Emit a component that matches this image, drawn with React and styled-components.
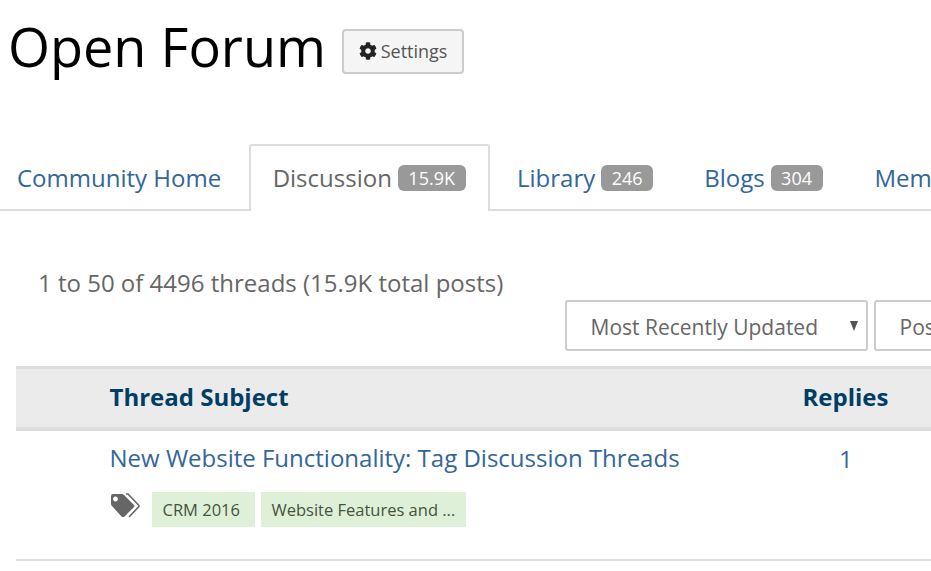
import React from "react";
import styled, { createGlobalStyle } from "styled-components";
import { FaCog } from "react-icons/fa";

const Global = createGlobalStyle`
  html, body { margin: 0; padding: 0; background: #fff; overflow: hidden; }
  body { font-family: "Open Sans", "Liberation Sans", sans-serif; color: #666; }
`;
const Page = styled.div`
  width: 931px; height: 571px; overflow: hidden;
`;
const Header = styled.header`
  display: flex; align-items: flex-start; gap: 16px;
  padding: 10px 0 0 8px; height: 134px; box-sizing: border-box;
`;
const Title = styled.h1`
  margin: 0; font-weight: 400; font-size: 54px; line-height: 72px; color: #000;
`;
const SettingsButton = styled.button`
  display: flex; align-items: center; gap: 4px; margin-top: 19px;
  width: 122px; height: 45px; justify-content: center; padding: 0 0 2px;
  background: #f5f5f5; border: 2px solid #ccc; border-radius: 4px;
  font-family: inherit; font-size: 18px; color: #555;
  svg { color: #222; font-size: 18px; }
`;
const Tabs = styled.nav`
  display: flex; align-items: flex-end; height: 77px; box-sizing: border-box;
  border-bottom: 2px solid #ddd; white-space: nowrap;
`;
const Tab = styled.a`
  display: flex; align-items: center; gap: 6px; box-sizing: border-box; flex: none;
  font-size: 24px; color: ${p => (p.$active ? "#666" : "#336699")};
  height: ${p => (p.$active ? "67px" : "63px")};
  padding: 0 ${p => p.$pr}px ${p => (p.$active ? "2px" : "0")} ${p => p.$pl}px;
  ${p => p.$active && `
    background: #fff; border: 2px solid #ddd; border-bottom: 0;
    border-radius: 3px 3px 0 0; position: relative; margin-bottom: -2px;
  `}
`;
const Badge = styled.span`
  display: inline-block; background: #999; color: #fff; border-radius: 6px;
  font-size: 18px; line-height: 26px; height: 26px; padding: 0 10.5px;
`;
const Summary = styled.div`
  padding: 57px 0 0 38px; font-size: 24px; line-height: 30px; color: #666;
`;
const Filters = styled.div`
  display: flex; gap: 6px; padding: 2px 0 0 565px; white-space: nowrap;
`;
const Select = styled.div`
  position: relative; flex: none; box-sizing: border-box; height: 51px;
  width: ${p => p.$w}px; padding-left: 23.5px; line-height: 50px;
  border: 2px solid #ccc; border-radius: 3px; font-size: 21px; color: #666; background: #fff;
`;
const Caret = styled.span`
  position: absolute; right: 8px; top: 19px; width: 0; height: 0;
  border-left: 4.5px solid transparent; border-right: 4.5px solid transparent;
  border-top: 10px solid #555;
`;
const ThreadGrid = styled.div`
  margin: 15px 0 0 16px; display: grid; grid-template-columns: 93.5px 660.5px 1fr;
`;
const HeadCell = styled.div`
  box-sizing: border-box; height: 65px; background: #ebebeb; color: #003e66;
  border-top: 3px solid #ddd; border-bottom: 4px solid #ddd;
  font-size: 24px; font-weight: 700; line-height: 56px;
  ${p => p.$pad && `padding-left: ${p.$pad}px;`}
`;
const RowCell = styled.div`
  box-sizing: border-box; height: 130px; border-bottom: 2px solid #ddd;
  padding-top: 10px;
`;
const ThreadLink = styled.a`
  display: block; font-size: 24px; line-height: 34px; color: #336699;
`;
const ReplyCount = styled.div`
  font-size: 24px; line-height: 34px; color: #336699; padding: 1px 0 0 69px;
`;
const TagRow = styled.div`
  display: flex; align-items: flex-start; gap: 6px; margin-top: 17px;
`;
const TagSvg = styled.svg`
  width: 30px; height: 26px; flex: none; margin: 1px 6.5px 0 0;
`;
const Tag = styled.span`
  background: #dff0d8; color: #44543c; font-size: 16.5px; line-height: 35px; height: 35px;
  padding: 0 ${p => p.$pr}px 0 10.5px;
`;

const TagsIcon = () => (
  <TagSvg viewBox="0 0 30 26">
    <path
      fill="#666"
      fillRule="evenodd"
      d="M1 3Q1 1 3 1L12 1Q13 1 14 2L24 12Q25 13 24 14L14.5 23.5Q13 25 11.5 23.5L2 13Q1 12 1 11ZM5.5 3.6a2.4 2.4 0 1 0 .01 0Z"
    />
    <path
      fill="none"
      stroke="#666"
      strokeWidth="1.6"
      d="M16 1L18 1L28.5 12Q29.5 13 28.5 14L19 24"
    />
  </TagSvg>
);

export default function App() {
  return (
    <Page>
      <Global />
      <Header>
        <Title>Open Forum</Title>
        <SettingsButton><FaCog />Settings</SettingsButton>
      </Header>
      <Tabs>
        <Tab $pl={17} $pr={28}>Community Home</Tab>
        <Tab $active $pl={21.5} $pr={22.5}>Discussion <Badge>15.9K</Badge></Tab>
        <Tab $pl={27} $pr={24}>Library <Badge>246</Badge></Tab>
        <Tab $pl={27} $pr={25}>Blogs <Badge>304</Badge></Tab>
        <Tab $pl={27} $pr={0}>Members</Tab>
      </Tabs>
      <Summary>1 to 50 of 4496 threads (15.9K total posts)</Summary>
      <Filters>
        <Select $w={303}>Most Recently Updated<Caret /></Select>
        <Select $w={200}>Posted</Select>
      </Filters>
      <ThreadGrid>
        <HeadCell />
        <HeadCell>Thread Subject</HeadCell>
        <HeadCell $pad={32.5}>Replies</HeadCell>
        <RowCell />
        <RowCell>
          <ThreadLink>New Website Functionality: Tag Discussion Threads</ThreadLink>
          <TagRow>
            <TagsIcon />
            <Tag $pr={15}>CRM 2016</Tag>
            <Tag $pr={10.5}>Website Features and ...</Tag>
          </TagRow>
        </RowCell>
        <RowCell><ReplyCount>1</ReplyCount></RowCell>
      </ThreadGrid>
    </Page>
  );
}
